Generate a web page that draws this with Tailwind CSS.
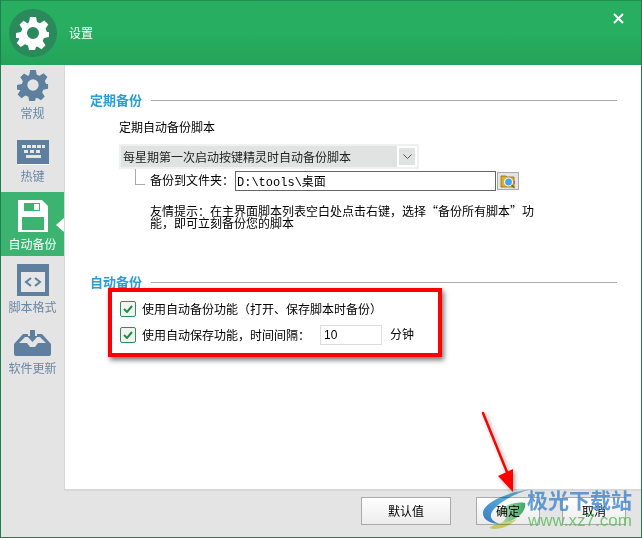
<!DOCTYPE html>
<html lang="zh">
<head>
  <meta charset="UTF-8">
  <title>设置</title>
  <script src="https://cdn.jsdelivr.net/npm/@tailwindcss/browser@4"></script>
</head>
<body class="bg-white">
  <div class="relative w-[642px] h-[538px] overflow-hidden flex flex-col border-x border-b border-[#1f7f4c] font-['Noto_Sans_CJK_SC','Liberation_Sans',sans-serif] text-[12px] text-black">
    <!-- header -->
    <header class="h-[65px] shrink-0 flex items-center bg-gradient-to-b from-[#27ae60] via-[#27ae60] to-[#24a35a] border-t border-[#1f8f50] relative">
      <div class="ml-[8px] w-[48px] h-[48px] rounded-full bg-[#2a8a5c] flex items-center justify-center">
        <svg class="w-[34px] h-[34px]" viewBox="0 0 34 34"><path fill="#fff" fill-rule="evenodd" d="M14 1h6l1 5 3 1.300 4.300-2.800 4 4-2.800 4.300L31 16l2 .0v5l-5 1-1.300 3 2.800 4.300-4 4-4.300-2.800-1.200.5-1 3h-6l-1-4.500-3-1.300-4.300 2.800-4-4 2.800-4.300L2 22l-2-.0v-5l5-1 1.300-3-2.800-4.300 4-4 4.300 2.800L13 6zM17 11a6 6 0 1 0 0 12 6 6 0 0 0 0-12z"/></svg>
      </div>
      <span class="ml-[12px] text-white text-[12px]">设置</span>
      <svg class="absolute right-[17px] top-[12px] w-[11px] h-[11px]" viewBox="0 0 11 11"><path d="M1 1l9 9M10 1l-9 9" stroke="#fff" stroke-width="2"/></svg>
    </header>
    <div class="flex flex-1 min-h-0">
      <!-- sidebar -->
      <aside class="w-[63px] shrink-0 bg-[#e4e4e4] flex flex-col text-[#6a87a3]">
        <div class="h-[63px] flex flex-col items-center pt-[4px]">
          <svg class="w-[32px] h-[32px]" viewBox="0 0 34 34"><path fill="#5f7f9f" fill-rule="evenodd" d="M14 1h6l1 5 3 1.300 4.300-2.800 4 4-2.800 4.300L31 16l2 .0v5l-5 1-1.300 3 2.800 4.300-4 4-4.300-2.800-1.200.5-1 3h-6l-1-4.500-3-1.300-4.300 2.800-4-4 2.800-4.300L2 22l-2-.0v-5l5-1 1.300-3-2.800-4.300 4-4 4.300 2.800L13 6zM17 11a6 6 0 1 0 0 12 6 6 0 0 0 0-12z"/></svg>
          <span class="mt-[4px] leading-[16px]">常规</span>
        </div>
        <div class="h-[64px] flex flex-col items-center pt-[12px]">
          <svg class="w-[32px] h-[25px]" viewBox="0 0 32 25"><rect width="32" height="24" fill="#5f7f9f"/><rect y="24" width="32" height="1" fill="#fff"/><g fill="#e6e6e6"><rect x="5" y="5" width="4" height="3"/><rect x="10" y="5" width="4" height="3"/><rect x="15" y="5" width="4" height="3"/><rect x="20" y="5" width="4" height="3"/><rect x="25" y="5" width="3" height="3"/><rect x="7" y="10" width="4" height="3"/><rect x="13" y="10" width="4" height="3"/><rect x="19" y="10" width="4" height="3"/><rect x="9" y="15" width="15" height="3"/></g></svg>
          <span class="mt-[3px] leading-[16px]">热键</span>
        </div>
        <div class="relative h-[64px] bg-[#3cb371] flex flex-col items-center pt-[8px] text-white">
          <svg class="w-[30px] h-[32px]" viewBox="0 0 30 32"><path fill="#fff" d="M0 0h24l6 6v26H0z"/><rect x="4" y="17" width="22" height="13" fill="#3cb371"/><rect x="6" y="3" width="16" height="8" fill="#3cb371"/><rect x="16" y="4" width="5" height="6" fill="#fff"/></svg>
          <span class="mt-[4px] leading-[16px]">自动备份</span>
          <span class="absolute right-0 top-[26px] w-0 h-0 border-y-[7px] border-y-transparent border-r-[8px] border-r-white"></span>
        </div>
        <div class="h-[64px] flex flex-col items-center pt-[8px]">
          <svg class="w-[32px] h-[32px]" viewBox="0 0 32 32"><rect width="32" height="32" fill="#5f7f9f"/><rect x="4" y="8" width="24" height="20" fill="#e6e6e6"/><path d="M14 14l-5 4 5 4M18 14l5 4-5 4" fill="none" stroke="#5f7f9f" stroke-width="2"/></svg>
          <span class="mt-[3px] leading-[16px]">脚本格式</span>
        </div>
        <div class="flex flex-col items-center pt-[10px]">
          <svg class="w-[37px] h-[26px]" viewBox="0 0 37 26"><path fill="#5f7f9f" d="M9 4h5v3h-3L5 13h8l3 4h5l3-4h8l-6-6h-3V4h5l9 10v10a2 2 0 0 1-2 2H2a2 2 0 0 1-2-2V14z"/><path fill="#5f7f9f" d="M16 0h5v6h3l-5.500 6L13 6h3z"/></svg>
          <span class="mt-[4px] leading-[16px]">软件更新</span>
        </div>
      </aside>
      <!-- main -->
      <main class="flex-1 flex flex-col min-w-0">
        <div class="flex-1 pl-[25px] pr-[24px] pt-[26px] bg-white border-l border-b-2 border-[#d8d8d8]">
          <div class="flex items-center h-[18px]">
            <h2 class="text-[13px] font-bold text-[#2a9fd6] leading-[18px]">定期备份</h2>
            <div class="ml-[9px] flex-1 h-px bg-[#ababab]"></div>
          </div>
          <p class="ml-[29px] mt-[9px] leading-[18px]">定期自动备份脚本</p>
          <div class="ml-[29px] mt-[8px] w-[300px] h-[25px] bg-[#f0f0f0] p-[2px] flex">
            <div class="flex-1 bg-[#e1e3e2] text-[#222] pl-[2px] leading-[21px]">每星期第一次启动按键精灵时自动备份脚本</div>
            <div class="w-[16px] border-2 border-white bg-[#e1e3e2] box-content flex items-center justify-center">
              <svg class="w-[9px] h-[5px]" viewBox="0 0 9 5"><path d="M.5.5l4 4 4-4" fill="none" stroke="#555"/></svg>
            </div>
          </div>
          <div class="ml-[45px] flex items-start">
            <div class="w-[10px] h-[16px] border-l border-b border-[#aaa]"></div>
            <span class="ml-[5px] mt-[2px] leading-[18px]">备份到文件夹：</span>
            <input class="ml-[1px] w-[261px] h-[20px] mt-[2px] border border-[#666] px-[1px] text-[12px] font-['Liberation_Mono','Noto_Sans_CJK_SC',monospace] outline-none" value="D:\tools\桌面">
            <div class="ml-[1px] mt-[3px] w-[22px] h-[18px] bg-[#e4e4e4] border border-[#aaa] flex items-center justify-center">
              <svg class="w-[16px] h-[15px]" viewBox="0 0 16 15"><path fill="#e0ae28" stroke="#8a6a10" stroke-width=".8" d="M1 2h5l1 1h7v10H1z"/><circle cx="8.500" cy="8" r="4" fill="#45a5ea" stroke="#f4f4f4" stroke-width="1.200"/><path d="M11.500 11l3 3" stroke="#8a6a10" stroke-width="1.500"/><path d="M14.500 7v3" stroke="#e040c0" stroke-width="1"/></svg>
            </div>
          </div>
          <p class="ml-[60px] mt-[14px] w-[430px] leading-[12px] whitespace-nowrap">友情提示：在主界面脚本列表空白处点击右键，选择“备份所有脚本”功<br>能，即可立刻备份您的脚本</p>
          <div class="flex items-center h-[18px] mt-[44px]">
            <h2 class="text-[13px] font-bold text-[#2a9fd6] leading-[18px]">自动备份</h2>
            <div class="ml-[9px] flex-1 h-px bg-[#ababab]"></div>
          </div>
          <label class="ml-[30px] mt-[9px] flex items-center h-[18px]">
            <span class="w-[16px] h-[16px] rounded-[2px] border border-[#2f8f4f] bg-[#f2f2f2] flex items-center justify-center"><svg class="w-[10px] h-[8px]" viewBox="0 0 10 8"><path d="M1 4l3 3 5-6" fill="none" stroke="#1f8f3f" stroke-width="2"/></svg></span>
            <span class="ml-[6px]">使用自动备份功能（打开、保存脚本时备份）</span>
          </label>
          <label class="ml-[30px] mt-[7px] flex items-center h-[20px]">
            <span class="w-[16px] h-[16px] rounded-[2px] border border-[#2f8f4f] bg-[#f2f2f2] flex items-center justify-center"><svg class="w-[10px] h-[8px]" viewBox="0 0 10 8"><path d="M1 4l3 3 5-6" fill="none" stroke="#1f8f3f" stroke-width="2"/></svg></span>
            <span class="ml-[6px] w-[178px]">使用自动保存功能，时间间隔：</span>
            <input class="w-[62px] h-[20px] border border-[#ddd] px-[3px] text-[12px] font-['Liberation_Sans',sans-serif] outline-none" value="10">
            <span class="ml-[8px] -mt-[3px]">分钟</span>
          </label>
        </div>
        <footer class="h-[46px] shrink-0 bg-[#e4e4e4] flex items-start pt-[6px] pl-[297px] gap-[25px]">
          <button class="w-[90px] h-[28px] border border-[#aaa] bg-gradient-to-b from-white to-[#ececec] text-[12px]">默认值</button>
          <button class="w-[64px] h-[28px] border border-[#aaa] bg-gradient-to-b from-white to-[#ececec] text-[12px]">确定</button>
          <button class="w-[64px] h-[28px] border border-[#aaa] bg-gradient-to-b from-white to-[#ececec] text-[12px] -ml-[3px]">取消</button>
        </footer>
      </main>
    </div>
    <!-- annotation overlays -->
    <div class="absolute left-[107px] top-[288px] w-[334px] h-[69px] border-[4px] border-[#ff0000] shadow-[2px_3px_5px_rgba(0,0,0,0.55)]"></div>
    <svg class="absolute left-[470px] top-[405px] w-[60px] h-[90px] drop-shadow-[2px_2px_2px_rgba(0,0,0,0.35)]" viewBox="0 0 60 90"><path d="M12 8L38 72" stroke="#f00" stroke-width="2.500" stroke-linecap="round"/><path fill="#f00" d="M27 71L42 64v23z"/></svg>
    <!-- watermark -->
    <div class="absolute left-[481px] top-[488px] w-[160px] h-[50px]">
      <svg class="absolute left-0 top-0 w-[52px] h-[46px] mix-blend-multiply" viewBox="0 0 52 46">
        <defs><linearGradient id="sw" x1="0" x2="1" y1="1" y2="0"><stop offset="0" stop-color="#3f86cc"/><stop offset=".7" stop-color="#5bb0e0"/><stop offset="1" stop-color="#8fd6e0"/></linearGradient>
        <linearGradient id="gr" x1="0" x2="1" y1="0" y2="0"><stop offset="0" stop-color="#d8ecd0"/><stop offset="1" stop-color="#35b060"/></linearGradient></defs>
        <path fill="url(#sw)" d="M50 1C25 4 3 14 1 24c-1 7 7 12 17 12C9 33 6 28 12 21 20 12 34 5 50 1z"/>
        <path fill="url(#gr)" d="M15 26c5-8 18-13 28-11 2 8-9 19-24 20 5-3 6-7 4-9z"/>
        <path fill="#d8e070" d="M7 40c8-6 18-5 28-9-7 7-18 12-28 9z"/>
      </svg>
      <span class="absolute left-[45px] top-[-3px] text-[21px] font-bold leading-[28px] text-[#3f86cc]/80 whitespace-nowrap">极光下载站</span>
      <span class="absolute left-[46px] top-[23px] text-[17px] leading-[20px] text-[#5cb85c]/80 font-['Liberation_Sans',sans-serif] whitespace-nowrap">www.xz7.com</span>
    </div>
  </div>
</body>
</html>
